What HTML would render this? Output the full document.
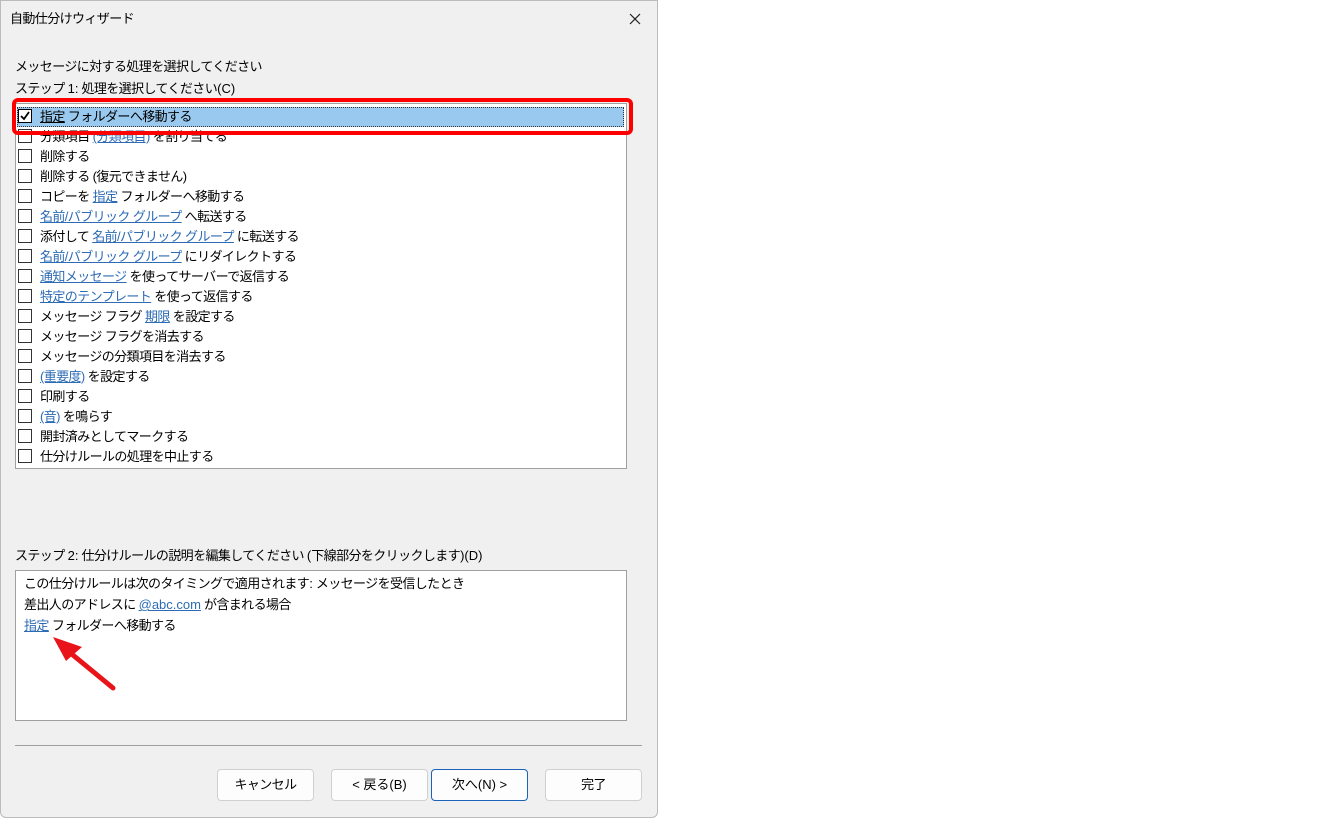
<!DOCTYPE html><html><head><meta charset="utf-8"><style>
*{box-sizing:border-box}
body{margin:0;width:1344px;height:818px;background:#fff;font-family:"Liberation Sans","Noto Sans CJK JP",sans-serif;font-size:13px;letter-spacing:-0.6px;color:#000;position:relative;overflow:hidden}
.dlg{position:absolute;left:0;top:0;width:658px;height:818px;background:#f0f0f0;border:1px solid #bbb;border-radius:0 0 6px 6px}
.t{position:absolute;white-space:nowrap;line-height:20px}
.list{position:absolute;left:14px;top:102px;width:612px;height:366px;background:#fff;border:1px solid #a0a0a0}
.row{position:absolute;left:1px;height:20px;width:607px;line-height:20px;white-space:nowrap}
.cb{display:inline-block;width:14px;height:14px;border:1px solid #333;background:#fff;vertical-align:-2px;margin:0 8px 0 1px}
a{color:#2d6bb4;text-decoration:underline}
.lat{letter-spacing:0}
.btn{position:absolute;top:768px;width:97px;height:32px;background:#fdfdfd;border:1px solid #d0d0d0;border-radius:4px;text-align:center;line-height:30px}
</style></head><body>
<div class="dlg">
<div class="t" style="left:9px;top:8px;font-size:13px">自動仕分けウィザード</div>
<svg style="position:absolute;left:628px;top:12px" width="12" height="12"><path d="M1 1L11 11M11 1L1 11" stroke="#222" stroke-width="1.2"/></svg>
<div class="t" style="left:14px;top:56px">メッセージに対する処理を選択してください</div>
<div class="t" style="left:14px;top:78px">ステップ <span class="lat">1:</span> 処理を選択してください<span class="lat">(C)</span></div>
<div class="list">
<div class="row" style="top:3px;background:#99c9ef;border:1px dotted #333;line-height:18px"><span class="cb" style="border-color:#000;margin-left:0"><svg width="12" height="12" style="display:block"><path d="M2 6L5 9L10 2" stroke="#000" stroke-width="1.8" fill="none"/></svg></span><u>指定</u> フォルダーへ移動する</div>
<div class="row" style="top:23px"><span class="cb"></span>分類項目 <a>(分類項目)</a> を割り当てる</div>
<div class="row" style="top:43px"><span class="cb"></span>削除する</div>
<div class="row" style="top:63px"><span class="cb"></span>削除する (復元できません)</div>
<div class="row" style="top:83px"><span class="cb"></span>コピーを <a>指定</a> フォルダーへ移動する</div>
<div class="row" style="top:103px"><span class="cb"></span><a>名前/パブリック グループ</a> へ転送する</div>
<div class="row" style="top:123px"><span class="cb"></span>添付して <a>名前/パブリック グループ</a> に転送する</div>
<div class="row" style="top:143px"><span class="cb"></span><a>名前/パブリック グループ</a> にリダイレクトする</div>
<div class="row" style="top:163px"><span class="cb"></span><a>通知メッセージ</a> を使ってサーバーで返信する</div>
<div class="row" style="top:183px"><span class="cb"></span><a>特定のテンプレート</a> を使って返信する</div>
<div class="row" style="top:203px"><span class="cb"></span>メッセージ フラグ <a>期限</a> を設定する</div>
<div class="row" style="top:223px"><span class="cb"></span>メッセージ フラグを消去する</div>
<div class="row" style="top:243px"><span class="cb"></span>メッセージの分類項目を消去する</div>
<div class="row" style="top:263px"><span class="cb"></span><a>(重要度)</a> を設定する</div>
<div class="row" style="top:283px"><span class="cb"></span>印刷する</div>
<div class="row" style="top:303px"><span class="cb"></span><a>(音)</a> を鳴らす</div>
<div class="row" style="top:323px"><span class="cb"></span>開封済みとしてマークする</div>
<div class="row" style="top:343px"><span class="cb"></span>仕分けルールの処理を中止する</div>
</div>
<div style="position:absolute;left:11px;top:97px;width:621px;height:37px;border:4px solid #f00;border-radius:6px"></div>
<div class="t" style="left:14px;top:545px">ステップ <span class="lat">2:</span> 仕分けルールの説明を編集してください <span class="lat">(</span>下線部分をクリックします<span class="lat">)(D)</span></div>
<div style="position:absolute;left:14px;top:569px;width:612px;height:151px;background:#fff;border:1px solid #a0a0a0">
<div class="t" style="left:8px;top:3px">この仕分けルールは次のタイミングで適用されます<span class="lat">:</span> メッセージを受信したとき</div>
<div class="t" style="left:8px;top:24px">差出人のアドレスに <a class="lat">@abc.com</a> が含まれる場合</div>
<div class="t" style="left:8px;top:45px"><a>指定</a> フォルダーへ移動する</div>
</div>
<svg style="position:absolute;left:45px;top:630px" width="80" height="65"><path d="M67 57L22 20" stroke="#e8141a" stroke-width="5" stroke-linecap="round"/><path d="M7 6L36 16L20 30Z" fill="#e8141a"/></svg>
<div style="position:absolute;left:14px;top:744px;width:627px;height:1px;background:#a0a0a0"></div>
<div class="btn" style="left:216px">キャンセル</div>
<div class="btn lat" style="left:330px">&lt; 戻る(B)</div>
<div class="btn lat" style="left:430px;border-color:#1a63b8">次へ(N) &gt;</div>
<div class="btn" style="left:544px">完了</div>
</div>
</body></html>
